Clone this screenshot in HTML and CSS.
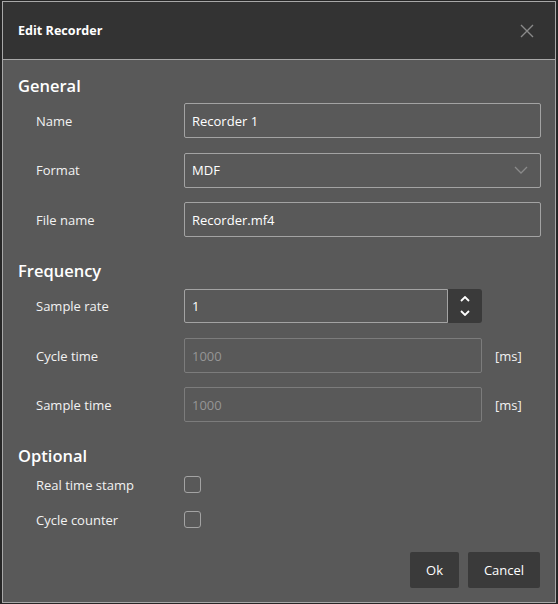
FILE: index.html
```html
<!DOCTYPE html>
<html>
<head>
<meta charset="utf-8">
<link rel="stylesheet" href="styles.css">
</head>
<body>
<div class="dialog">
  <div class="header">
    <span class="title">Edit Recorder</span>
    <svg class="close" width="14" height="14" viewBox="0 0 14 14"><path d="M1 1L13 13M13 1L1 13" stroke="#8a8a8a" stroke-width="1.4" fill="none"/></svg>
  </div>
  <div class="content">
    <h2 class="section first">General</h2>
    <div class="row">
      <span class="label">Name</span>
      <div class="field wide">Recorder 1</div>
    </div>
    <div class="row">
      <span class="label">Format</span>
      <div class="field wide select">MDF
        <svg class="chev" width="14" height="8" viewBox="0 0 14 8"><path d="M1 1L7 7L13 1" stroke="#8a8a8a" stroke-width="1.3" fill="none"/></svg>
      </div>
    </div>
    <div class="row">
      <span class="label">File name</span>
      <div class="field wide">Recorder.mf4</div>
    </div>

    <h2 class="section freq">Frequency</h2>
    <div class="row frow">
      <span class="label">Sample rate</span>
      <div class="spin">
        <div class="field spinfield">1</div>
        <div class="spinbtn">
          <svg width="10" height="6" viewBox="0 0 10 6"><path d="M1 5L5 1L9 5" stroke="#fff" stroke-width="1.8" fill="none"/></svg>
          <svg width="10" height="6" viewBox="0 0 10 6"><path d="M1 1L5 5L9 1" stroke="#fff" stroke-width="1.8" fill="none"/></svg>
        </div>
      </div>
    </div>
    <div class="row frow second">
      <span class="label">Cycle time</span>
      <div class="field mid disabled">1000</div>
      <span class="unit">[ms]</span>
    </div>
    <div class="row frow">
      <span class="label">Sample time</span>
      <div class="field mid disabled">1000</div>
      <span class="unit">[ms]</span>
    </div>

    <h2 class="section">Optional</h2>
    <div class="row crow">
      <span class="label">Real time stamp</span>
      <span class="check"></span>
    </div>
    <div class="row crow">
      <span class="label">Cycle counter</span>
      <span class="check"></span>
    </div>
  </div>
  <div class="footer">
    <button class="btn ok">Ok</button>
    <button class="btn cancel">Cancel</button>
  </div>
</div>
</body>
</html>
```

FILE: styles.css
```css
html, body {
  margin: 0;
  padding: 0;
  background: #262626;
}
body {
  padding: 1px 2px 0 2px;
  font-family: "Open Sans", "Noto Sans", sans-serif;
  color: #f2f2f2;
}
.dialog {
  width: 552px;
  height: 600px;
  border: 1px solid #a8a8a8;
  background: #595959;
  display: flex;
  flex-direction: column;
}
.header {
  height: 57px;
  background: #333333;
  border-bottom: 1px solid #a8a8a8;
  display: flex;
  align-items: center;
  justify-content: space-between;
  padding: 0 21px 0 15px;
  flex-shrink: 0;
}
.title {
  font-weight: 700;
  font-size: 12.6px;
  color: #ffffff;
}
.close {
  display: block;
}
.content {
  padding: 14px 0 0 15px;
  display: flex;
  flex-direction: column;
  flex: 1;
}
.section {
  margin: 22px 0 5px 0;
  height: 24px;
  line-height: 24px;
  font-size: 16.5px;
  font-weight: 600;
  color: #ffffff;
}
.section.first {
  margin-top: 0;
}
.section.freq {
  margin-bottom: 6px;
}
.row {
  display: flex;
  align-items: center;
  padding-left: 18px;
  font-size: 13px;
}
.row + .row {
  margin-top: 14.5px;
}
.frow + .frow {
  margin-top: 14px;
}
.frow + .frow.second {
  margin-top: 15px;
}
.label {
  width: 148px;
  flex-shrink: 0;
}
.field {
  box-sizing: border-box;
  height: 35px;
  border: 1px solid #a3a3a3;
  border-radius: 2px;
  padding: 0 7px;
  display: flex;
  align-items: center;
  font-size: 13px;
  color: #ffffff;
}
.wide {
  width: 357px;
}
.select {
  justify-content: space-between;
  padding-right: 12px;
}
.chev {
  display: block;
}
.mid {
  width: 298px;
}
.disabled {
  border-color: #7c7c7c;
  color: #959595;
}
.unit {
  margin-left: 13px;
}
.spin {
  display: flex;
  height: 34px;
}
.spinfield {
  width: 264px;
  height: 34px;
  border-radius: 2px 0 0 2px;
}
.spinbtn {
  width: 34px;
  height: 34px;
  background: #3a3a3a;
  border-radius: 0 3px 3px 0;
  display: flex;
  flex-direction: column;
  align-items: center;
  justify-content: center;
  gap: 8px;
}
.spinbtn svg {
  display: block;
}
.section + .crow {
  margin-top: -6px;
}
.crow {
  height: 35px;
}
.row.crow + .row.crow {
  margin-top: 0;
}
.check {
  box-sizing: border-box;
  width: 17px;
  height: 17px;
  border: 1px solid #a3a3a3;
  border-radius: 3px;
}
.footer {
  display: flex;
  justify-content: flex-end;
  gap: 9px;
  padding: 0 15px 14px 0;
}
.btn {
  height: 36px;
  border: none;
  border-radius: 2px;
  background: #3a3a3a;
  color: #ffffff;
  font-family: "Open Sans", "Noto Sans", sans-serif;
  font-size: 13px;
  padding: 0;
}
.ok {
  width: 49px;
}
.cancel {
  width: 72px;
}
```
